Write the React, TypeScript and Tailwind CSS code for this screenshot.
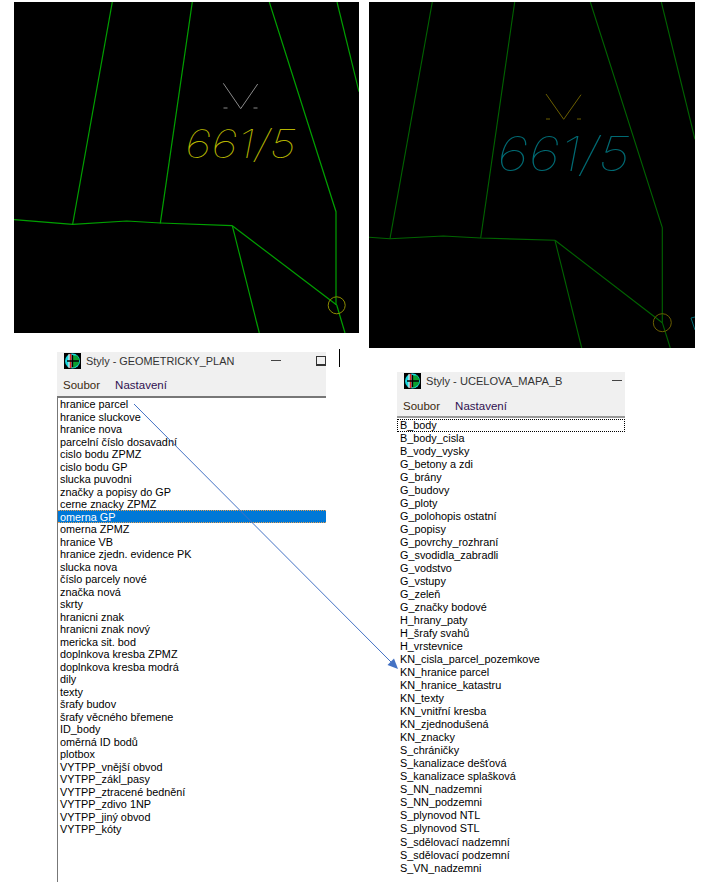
const leftItems = [
  "hranice parcel",
  "hranice sluckove",
  "hranice nova",
  "parcelní číslo dosavadní",
  "cislo bodu ZPMZ",
  "cislo bodu GP",
  "slucka puvodni",
  "značky a popisy do GP",
  "cerne znacky ZPMZ",
  "omerna GP",
  "omerna ZPMZ",
  "hranice VB",
  "hranice zjedn. evidence PK",
  "slucka nova",
  "číslo parcely nové",
  "značka nová",
  "skrty",
  "hranicni znak",
  "hranicni znak nový",
  "mericka sit. bod",
  "doplnkova kresba ZPMZ",
  "doplnkova kresba modrá",
  "dily",
  "texty",
  "šrafy budov",
  "šrafy věcného břemene",
  "ID_body",
  "oměrná ID bodů",
  "plotbox",
  "VYTPP_vnější obvod",
  "VYTPP_zákl_pasy",
  "VYTPP_ztracené bednění",
  "VYTPP_zdivo 1NP",
  "VYTPP_jiný obvod",
  "VYTPP_kóty",
];

const rightItems = [
  "B_body",
  "B_body_cisla",
  "B_vody_vysky",
  "G_betony a zdi",
  "G_brány",
  "G_budovy",
  "G_ploty",
  "G_polohopis ostatní",
  "G_popisy",
  "G_povrchy_rozhraní",
  "G_svodidla_zabradli",
  "G_vodstvo",
  "G_vstupy",
  "G_zeleň",
  "G_značky bodové",
  "H_hrany_paty",
  "H_šrafy svahů",
  "H_vrstevnice",
  "KN_cisla_parcel_pozemkove",
  "KN_hranice parcel",
  "KN_hranice_katastru",
  "KN_texty",
  "KN_vnitřní kresba",
  "KN_zjednodušená",
  "KN_znacky",
  "S_chráničky",
  "S_kanalizace dešťová",
  "S_kanalizace splašková",
  "S_NN_nadzemni",
  "S_NN_podzemni",
  "S_plynovod NTL",
  "S_plynovod STL",
  "S_sdělovací nadzemní",
  "S_sdělovací podzemní",
  "S_VN_nadzemni",
];

const AppIcon = () => (
  <svg width="17" height="16" viewBox="0 0 17 16" className="mt-px shrink-0">
    <rect width="17" height="16" fill="#000" />
    <circle cx="8.5" cy="8" r="7.5" fill="#18d8e0" />
    <path d="M8 2.5h5l2.5 4-1 5-4 3H8z" fill="#0aa030" />
    <path d="M5.5 1h2v14h-2z" fill="#e82020" />
    <path d="M4.5 1h1v14h-1z" fill="#f0f0f0" />
    <path d="M8.5 2v12M3 8h12" stroke="#000" strokeWidth="1.3" />
  </svg>
);

const CadPanel = ({
  viewBox,
  className,
  lineColor,
  lineWidth,
  markColor,
  children,
  lines,
}: {
  viewBox: string;
  className: string;
  lineColor: string;
  lineWidth: string;
  markColor: string;
  children: React.ReactNode;
  lines: string[];
}) => (
  <svg viewBox={viewBox} className={className} fill="none">
    {lines.map((d, i) => (
      <path key={i} d={d} stroke={lineColor} strokeWidth={lineWidth} />
    ))}
    <g stroke={markColor}>{children}</g>
  </svg>
);

const StyleWindow = ({
  title,
  items,
  rowClass,
  selected,
  focused,
  controls,
  className,
  titleClass,
  titleTextClass,
  menuClass,
  listClass,
}: {
  title: string;
  items: string[];
  rowClass: string;
  selected?: number;
  focused?: number;
  controls: React.ReactNode;
  className: string;
  titleClass: string;
  titleTextClass: string;
  menuClass: string;
  listClass: string;
}) => (
  <div className={`flex flex-col font-['Liberation_Sans',sans-serif] text-black ${className}`}>
    <div className={`flex items-start bg-[#f0f0f0] pl-[7px] ${titleClass}`}>
      <AppIcon />
      <span className={`ml-[5px] leading-[18px] text-[#333] ${titleTextClass}`}>{title}</span>
      {controls}
    </div>
    <div className={`flex items-center gap-[15px] bg-[#f0f0f0] pl-[6px] text-[11.5px] ${menuClass}`}>
      <span className="text-[#3a2a10]">Soubor</span>
      <span className="text-[#301050]">Nastavení</span>
    </div>
    <ul className={listClass}>
      {items.map((item, i) => (
        <li
          key={item}
          className={`truncate text-[10.85px] ${rowClass} ${
            i === selected
              ? "-mt-[1px] h-[13.5px] border-y border-dotted border-[#e8a050] bg-[#0078d7] text-white"
              : ""
          } ${i === focused ? "outline-1 -outline-offset-1 outline-dotted outline-black" : ""}`}
        >
          {item}
        </li>
      ))}
    </ul>
  </div>
);

export default function App() {
  return (
    <div className="relative h-[882px] w-[719px] overflow-hidden bg-white">
      <div className="flex items-start gap-[10px] pl-[14px] pt-[2px]">
        <CadPanel
          viewBox="14 2 345 331"
          className="h-[331px] w-[345px] bg-black"
          lineColor="#00a000"
          lineWidth="1.2"
          markColor="#8c8c00"
          lines={[
            "M112.3 2 72.7 224",
            "M192.3 2 160.3 223.3",
            "M269.3 2 336 211.7V305",
            "M337 2 359 91.7",
            "M14 219.7 72.7 224.3 126.7 221 160.3 223 232.3 225.7",
            "M232.3 225.7 259.3 333",
            "M232.3 225.7 336.7 305",
            "M336.7 305 345 333",
          ]}
        >
          <circle cx="336.7" cy="305.3" r="8.5" />
          <path d="M223.3 83.3 240.7 108.7 257.7 84M223.5 108h4M253.5 108h4" stroke="#8a8a8a" />
          <text
            x="185"
            y="158"
            stroke="none"
            fill="#b4b400"
            textLength="111"
            lengthAdjust="spacingAndGlyphs"
            className="font-['Inter',sans-serif] text-[39px] font-thin italic"
          >
            661/5
          </text>
        </CadPanel>
        <CadPanel
          viewBox="369 2 326 346"
          className="h-[346px] w-[326px] bg-black"
          lineColor="#006400"
          lineWidth="1.1"
          markColor="#6a5e00"
          lines={[
            "M432.3 2 390 238.7",
            "M514.7 2 480.7 238",
            "M590.3 2 662.3 227.7V322.7",
            "M661.3 2 695 139.3",
            "M369 237.3 390 238.7 443.3 236 480.7 238 555 240.3",
            "M555 240.3 581.7 348",
            "M555 240.3 662.3 322.7",
            "M662.3 322.7 670.3 348",
          ]}
        >
          <circle cx="662.3" cy="322.7" r="9" />
          <path d="M546 94 563.7 119.3 581 94.7M546 119h4M577 119h4" />
          <path d="M695 317 691 318 695 330" stroke="#006a73" />
          <text
            x="497"
            y="171"
            stroke="none"
            fill="#006a73"
            textLength="133"
            lengthAdjust="spacingAndGlyphs"
            className="font-['Inter',sans-serif] text-[47px] font-thin italic"
          >
            661/5
          </text>
        </CadPanel>
      </div>

      <div className="flex items-start pl-[57px]">
        <StyleWindow
          title="Styly - GEOMETRICKY_PLAN"
          items={leftItems}
          rowClass="h-[12.5px] pl-[2px] leading-[12.5px]"
          selected={9}
          controls={
            <>
              <div className="ml-auto mt-2 h-px w-[10px] bg-[#444]" />
              <div className="ml-[35px] mt-1 h-[10px] w-[10px] border border-b-2 border-[#333]" />
            </>
          }
          className="mt-1 w-[269px]"
          titleClass="h-6"
          titleTextClass="text-[10.9px]"
          menuClass="h-5"
          listClass="h-[486px] border-l border-t-2 border-[#777]"
        />
        <div className="ml-[13px] mt-[1px] h-[18px] w-px bg-black" />
        <StyleWindow
          title="Styly - UCELOVA_MAPA_B"
          items={rightItems}
          rowClass="h-[13.03px] pl-[3px] leading-[13px]"
          focused={0}
          controls={<div className="ml-auto mr-[3px] mt-2 h-px w-[10px] bg-[#444]" />}
          className="ml-[57px] mt-6 w-[228px]"
          titleClass="h-[26px]"
          titleTextClass="text-[11.1px]"
          menuClass="h-[18px]"
          listClass="border-t-2 border-[#999] pt-[1px]"
        />
      </div>

      {/* arrow from the left list to the right one */}
      <svg className="pointer-events-none absolute inset-0 h-[882px] w-[719px]" viewBox="0 0 719 882" fill="none">
        <path d="M134 404 393 664" stroke="#4472c4" strokeWidth="1" />
        <path d="M398 669 387.5 665 394 658.5z" fill="#4472c4" />
      </svg>
    </div>
  );
}
